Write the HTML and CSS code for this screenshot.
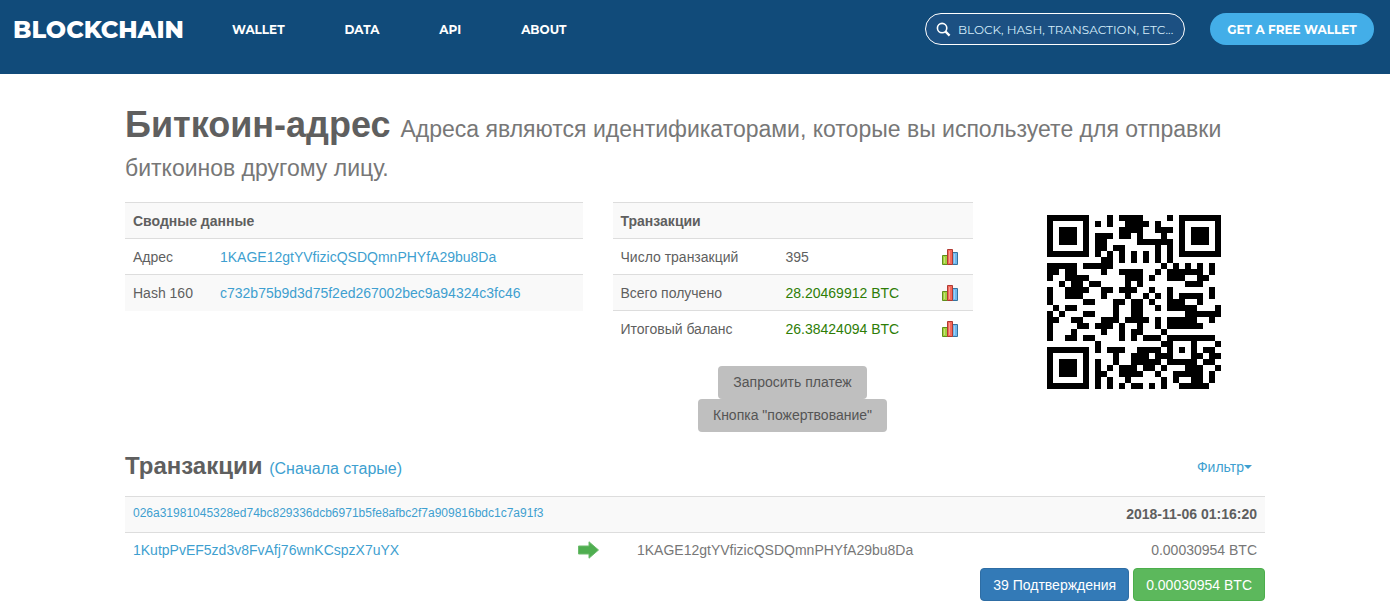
FILE: index.html
```html
<!DOCTYPE html>
<html lang="ru">
<head>
<meta charset="utf-8">
<title>Биткоин-адрес</title>
<link rel="stylesheet" href="styles.css">
</head>
<body>
<svg class="defs" aria-hidden="true">
  <symbol id="chart" viewBox="0 0 16 16">
    <path d="M.5 6.500h5v9h-5z" fill="#a3d13c" stroke="#5e8f1c"/>
    <path d="M10.500 3.500h5v12h-5z" fill="#70b8ee" stroke="#35749f"/>
    <path d="M5.500.5h5v15h-5z" fill="#f46a5c" stroke="#b03a33"/>
    <path d="M2.500 8v6M12.500 5v9M7.500 2v12" stroke="#fff" stroke-opacity=".35"/>
  </symbol>
</svg>
<header class="topbar">
  <a class="logo" href="#">BLOCKCHAIN</a>
  <nav class="nav">
    <a href="#">WALLET</a>
    <a href="#">DATA</a>
    <a href="#">API</a>
    <a href="#">ABOUT</a>
  </nav>
  <label class="search">
    <svg class="search-icon" viewBox="0 0 16 16" aria-hidden="true"><circle cx="6.500" cy="6.500" r="5" fill="none" stroke="#fff" stroke-width="1.700"/><path d="M10 10l4.500 4.500" stroke="#fff" stroke-width="2.400"/></svg>
    <input type="text" aria-label="Search" placeholder="BLOCK, HASH, TRANSACTION, ETC...">
  </label>
  <button class="cta" type="button">GET A FREE WALLET</button>
</header>
<main class="container">
  <h1 class="title">Биткоин-адрес <small>Адреса являются идентификаторами, которые вы используете для отправки биткоинов другому лицу.</small></h1>
  <div class="row">
    <section class="summary">
      <table class="table">
        <thead><tr><th colspan="2">Сводные данные</th></tr></thead>
        <tbody>
          <tr><td class="key">Адрес</td><td><a href="#">1KAGE12gtYVfizicQSDQmnPHYfA29bu8Da</a></td></tr>
          <tr><td class="key">Hash 160</td><td><a href="#">c732b75b9d3d75f2ed267002bec9a94324c3fc46</a></td></tr>
        </tbody>
      </table>
    </section>
    <section class="totals">
      <table class="table">
        <thead><tr><th colspan="3">Транзакции</th></tr></thead>
        <tbody>
          <tr><td class="name">Число транзакций</td><td>395</td><td class="chart-cell"><a href="#" aria-label="График"><svg class="chart"><use href="#chart"/></svg></a></td></tr>
          <tr><td class="name">Всего получено</td><td class="green">28.20469912 BTC</td><td class="chart-cell"><a href="#" aria-label="График"><svg class="chart"><use href="#chart"/></svg></a></td></tr>
          <tr><td class="name">Итоговый баланс</td><td class="green">26.38424094 BTC</td><td class="chart-cell"><a href="#" aria-label="График"><svg class="chart"><use href="#chart"/></svg></a></td></tr>
        </tbody>
      </table>
      <div class="actions">
        <button class="btn gray" type="button">Запросить платеж</button>
        <button class="btn gray" type="button">Кнопка "пожертвование"</button>
      </div>
    </section>
    <section class="code">
      <svg class="qr" id="qr" viewBox="0 0 29 29" shape-rendering="crispEdges" role="img" aria-label="QR"></svg>
    </section>
  </div>
  <div class="list-head">
    <h2>Транзакции <a href="#">(Сначала старые)</a></h2>
    <a class="filter" href="#">Фильтр<span class="caret"></span></a>
  </div>
  <table class="table tx">
    <thead>
      <tr><td colspan="3"><a class="hash" href="#">026a31981045328ed74bc829336dcb6971b5fe8afbc2f7a909816bdc1c7a91f3</a></td><th class="right">2018-11-06 01:16:20</th></tr>
    </thead>
    <tbody>
      <tr>
        <td class="from"><a href="#">1KutpPvEF5zd3v8FvAfj76wnKCspzX7uYX</a></td>
        <td class="arrow-cell"><svg class="arrow" viewBox="0 0 21 18" aria-hidden="true"><path d="M.5 5H11V.8L20.500 9 11 17.200V13H.5z" fill="#4fae50" stroke="#6cbb6c"/></svg></td>
        <td class="to">1KAGE12gtYVfizicQSDQmnPHYfA29bu8Da</td>
        <td class="right amount">0.00030954 BTC</td>
      </tr>
    </tbody>
  </table>
  <div class="status">
    <button class="btn blue" type="button">39 Подтверждения</button>
    <button class="btn success" type="button">0.00030954 BTC</button>
  </div>
</main>
<script src="qr.js"></script>
</body>
</html>
```
FILE: styles.css
```css
* { box-sizing: border-box; }
body { margin: 0; background: #fff; color: #5f5f5f; font: 14px/20px "Liberation Sans", Arial, sans-serif; }
a { color: #3e9fd0; text-decoration: none; }
button, input { font-family: inherit; }
.defs { display: none; }

.topbar { display: flex; align-items: flex-start; height: 74px; padding: 13px 16px 0 13px; background: #114b7a; font-family: Montserrat, Lato, sans-serif; }
.logo { color: #fff; font-size: 24px; font-weight: 800; line-height: 34px; }
.nav { display: flex; gap: 60px; margin: 0 auto 0 48px; }
.nav a { color: #fff; font-size: 12px; font-weight: 700; line-height: 34px; }
.search { display: flex; align-items: center; gap: 7px; width: 260px; height: 32px; padding: 0 8px 0 10px; border: 1px solid #fff; border-radius: 16px; background: #1c5082; }
.search-icon { flex: none; width: 15px; height: 15px; }
.search input { flex: 1; min-width: 0; padding: 0; border: 0; outline: 0; background: none; color: #fff; font-size: 12px; }
.search input::placeholder { color: #d4ecfa; opacity: 1; }
.cta { width: 164px; height: 32px; margin-left: 25px; padding: 0; border: 0; border-radius: 16px; background: #43aee8; color: #fff; font-size: 12px; font-weight: 700; }

.container { max-width: 1140px; margin: 0 auto; padding-top: 31px; }
.title { margin: 0 0 19px; font-size: 36px; line-height: 39px; font-weight: bold; }
.title small { color: #777; font-size: 23px; line-height: 28px; font-weight: normal; }

.row { display: grid; grid-template-columns: minmax(0, 5fr) minmax(0, 4fr) minmax(0, 3fr); margin: 0 -15px; }
.row > section { padding: 0 15px; }
.row > .code { padding-top: 13px; text-align: center; }
.table { width: 100%; border-collapse: collapse; }
.table th, .table td { height: 36px; padding: 7px 8px; border-top: 1px solid #ddd; text-align: left; line-height: 20px; }
.table tr:nth-child(even), .table thead tr { background: #f9f9f9; }
.key { width: 87px; }
.name { width: 165px; }
.table .green { color: #2e7d06; }
.table .chart-cell { padding: 0 15px; }
.chart-cell a { display: block; }
.chart { display: block; width: 16px; height: 16px; margin-left: auto; }
.actions { display: flex; flex-direction: column; align-items: center; margin-top: 19px; }
.btn { height: 33px; padding: 0 12px; border: 1px solid transparent; border-radius: 4px; font-size: 14px; line-height: 20px; color: #fff; }
.gray { padding: 0 14px; background: #bfbfbf; color: #555; }
.qr { width: 174px; height: 174px; }

.list-head { display: flex; justify-content: space-between; align-items: center; margin: 18px 0 14px; padding-right: 13px; }
.list-head h2 { margin: 0; font-size: 24px; line-height: 32px; }
.list-head h2 a { font-size: 16px; line-height: 20px; font-weight: normal; }
.filter { display: flex; align-items: center; padding-top: 3px; }
.caret { border-top: 4px solid; border-left: 4px solid transparent; border-right: 4px solid transparent; }
.tx thead td { padding-top: 6px; vertical-align: top; }
.tx .hash { display: block; font-size: 12px; }
.table .right { text-align: right; }
.from { width: 445px; }
.arrow-cell { width: 59px; }
.arrow { display: block; width: 21px; height: 18px; }
.to, .amount { color: #777; }
.status { display: flex; justify-content: flex-end; gap: 4px; }
.blue { background: #337ab7; border-color: #2e6da4; }
.success { background: #5cb85c; border-color: #4cae4c; }
```
FILE: qr.js
```javascript
const rows = [
  "#######...#.####....#.#######",
  "#.....#.#.#..####.#...#.....#",
  "#.###.#.....####..###.#.###.#",
  "#.###.#.###.##.#...#..#.###.#",
  "#.###.#.##.....######.#.###.#",
  "#.....#.##.##.....#.#.#.....#",
  "#######.#.#.#.#.#.#.#.#######",
  ".........##.#.#.#.#.#........",
  "#####.#####........#.#.#.#.#.",
  "##.##....#..####..#.######.#.",
  "#..####......###.#..###..##..",
  "..#.##.##....#.#.......###...",
  "#..####..##.###..#..#......#.",
  "#..###...#...#..#.#.#.####.#.",
  "#.....##...##.##.#..###..#...",
  ".#.##......#..##..#.#####...#",
  "#.#...##...#..##.......######",
  "##..##...###.####.#.#####..#.",
  "#....##.###.#..#..#.######...",
  "#...#....#..#.##...#.........",
  "#..##.##....#.#.###.########.",
  "........#..........##...#...#",
  "#######.#.###..####.#.#.#.##.",
  "#.....#....#..###.###...##.##",
  "#.###.#.#..#..#####.#####.##.",
  "#.###.#.#.#.###.##.#...###..#",
  "#.###.#.##..####..#..#####.#.",
  "#.....#.#.#..#.....#.#..##.#.",
  "#######.#.#.#.##.#.#..#####.."
];
let d = "";
rows.forEach((row, y) => [...row].forEach((cell, x) => {
  if (cell === "#") d += `M${x} ${y}h1v1h-1z`;
}));
const path = document.createElementNS("http://www.w3.org/2000/svg", "path");
path.setAttribute("d", d);
document.getElementById("qr").append(path);
```
